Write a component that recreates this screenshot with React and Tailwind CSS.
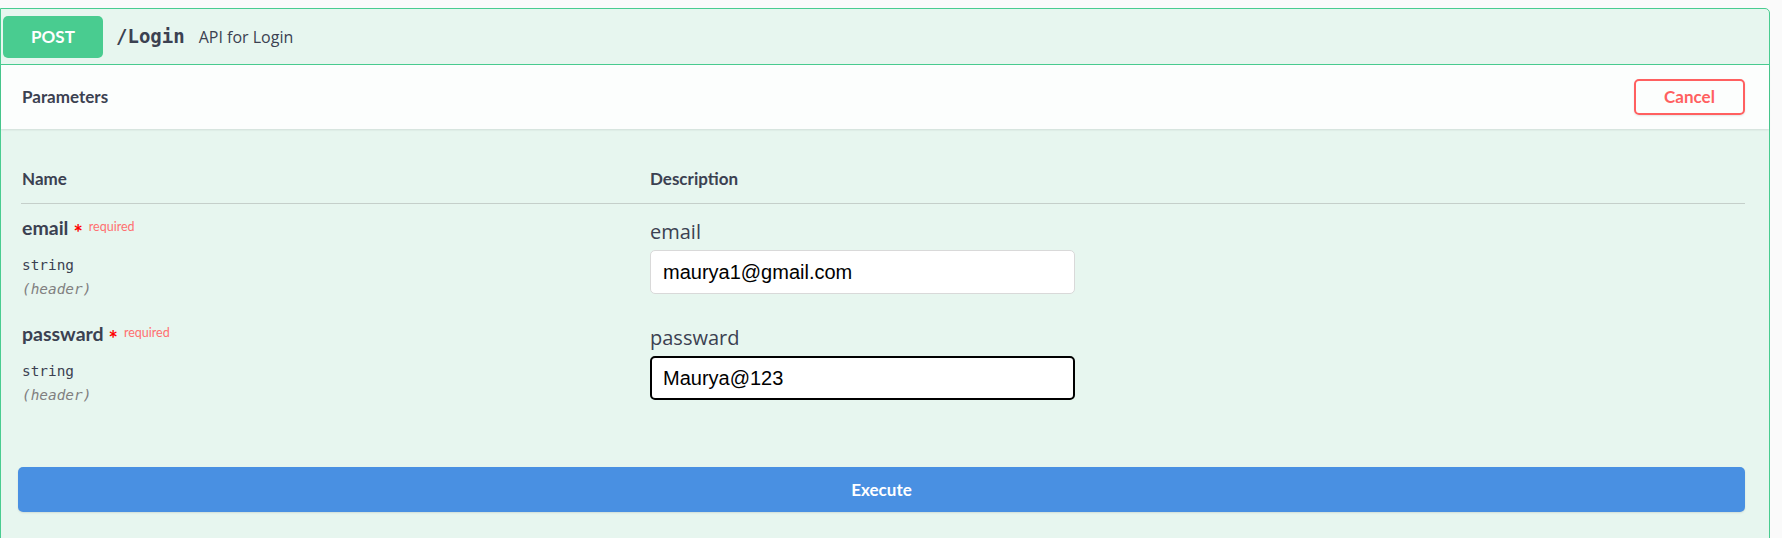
import React from "react";

const sans = "font-['Lato','Open_Sans',sans-serif]";
const open = "font-['Open_Sans','Noto_Sans',sans-serif]";
const mono = "font-['DejaVu_Sans_Mono','Liberation_Mono',monospace]";

function ParamRow({ name, value, focused }) {
  return (
    <div className="flex">
      <div className="w-[629px] pt-[12px] pl-[1px]">
        <div className={`${sans} flex items-start h-[24px] text-[19.5px] leading-[24px] font-bold text-[#3b4151]`}>
          <span>{name}</span>
          <span className="text-[#ff0000] text-[22px] font-bold leading-[24px] relative top-[5px] ml-[5px]">*</span>
          <span className="text-[#ff7070] text-[12.5px] font-normal leading-[14px] ml-[6px] relative top-[4px]">required</span>
        </div>
        <div className={`${mono} mt-[15px] text-[14.4px] leading-[20px] font-normal text-[#3b4151]`}>string</div>
        <div className={`${mono} mt-[4px] text-[14.4px] leading-[20px] font-normal italic text-[#808080]`}>(header)</div>
      </div>
      <div className="pt-[16px] pb-[16px]">
        <div className={`${open} text-[20px] leading-[24px] text-[#3b4151]`}>{name}</div>
        <input
          readOnly
          value={value}
          className={
            focused
              ? "mt-[6px] block w-[425px] h-[44px] rounded-[5px] border-2 border-black bg-white pl-[11px] text-[20px] text-black font-['Liberation_Sans',Arial,sans-serif] outline-none"
              : "mt-[6px] block w-[425px] h-[44px] rounded-[5px] border border-[#d9d9d9] bg-white pl-[12px] text-[20px] text-black font-['Liberation_Sans',Arial,sans-serif] outline-none"
          }
        />
      </div>
    </div>
  );
}

export default function App() {
  return (
    <div className="w-[1782px] h-[538px] overflow-hidden bg-[#fafafa] pt-[8px]">
      <div className="w-[1770px] border border-[#49cc90] rounded-tr-[5px] bg-[#e7f6ef]">
        {/* summary */}
        <div className="flex items-center h-[56px] border-b border-[#49cc90] pl-[2px]">
          <div className={`${sans} flex items-center justify-center w-[100px] h-[42px] rounded-[5px] bg-[#49cc90] text-white text-[17px] font-bold`}>
            POST
          </div>
          <span className={`${mono} ml-[13px] text-[19px] font-bold text-[#3b4151]`}>/Login</span>
          <span className={`${open} ml-[14px] text-[16px] text-[#3b4151]`}>API for Login</span>
        </div>

        {/* section header */}
        <div className="flex items-center justify-between h-[64px] pl-[21px] pr-[24px] bg-[#fcfefd] shadow-[0_1px_2px_rgba(0,0,0,0.1)]">
          <div className={`${sans} text-[17px] font-bold text-[#3b4151]`}>Parameters</div>
          <button className={`${sans} w-[111px] h-[36px] rounded-[5px] border-2 border-[#ff6060] text-[#ff6060] text-[17px] font-bold shadow-[0_1px_2px_rgba(0,0,0,0.1)]`}>
            Cancel
          </button>
        </div>

        {/* body */}
        <div className="pl-[17px] pr-[24px] pb-[30px]">
          <div className="ml-[3px]">
            <div className={`${sans} mt-[38px] flex h-[37px] pb-[12px] border-b border-[#c5cfca] text-[17px] leading-[24px] font-bold text-[#3b4151]`}>
              <div className="w-[629px] pl-[1px]">Name</div>
              <div>Description</div>
            </div>
            <ParamRow name="email" value="maurya1@gmail.com" />
            <ParamRow name="passward" value="Maurya@123" focused />
          </div>
          <button className={`${sans} mt-[51px] w-full h-[45px] rounded-[5px] bg-[#4990e2] text-white text-[17px] font-bold shadow-[0_1px_2px_rgba(0,0,0,0.1)]`}>
            Execute
          </button>
        </div>
      </div>
    </div>
  );
}
